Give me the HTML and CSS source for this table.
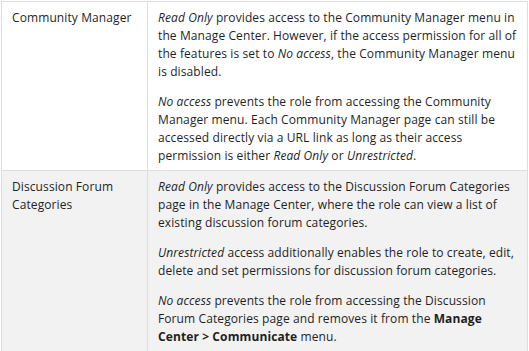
FILE: index.html
```html
<!DOCTYPE html>
<html>
<head>
<meta charset="utf-8">
<link rel="stylesheet" href="styles.css">
</head>
<body>
<table class="perm">
  <tr class="row-white">
    <td class="name">Community Manager</td>
    <td class="desc">
      <p><em>Read Only</em> provides access to the Community Manager menu in the Manage Center. However, if the access permission for all of the features is set to <em>No access</em>, the Community Manager menu is disabled.</p>
      <p><em>No access</em> prevents the role from accessing the Community Manager menu. Each Community Manager page can still be accessed directly via a URL link as long as their access permission is either <em>Read Only</em> or <em>Unrestricted</em>.</p>
    </td>
  </tr>
  <tr class="row-gray">
    <td class="name">Discussion Forum Categories</td>
    <td class="desc">
      <p><em>Read Only</em> provides access to the Discussion Forum Categories page in the Manage Center, where the role can view a list of existing discussion forum categories.</p>
      <p><em>Unrestricted</em> access additionally enables the role to create, edit, delete and set permissions for discussion forum categories.</p>
      <p><em>No access</em> prevents the role from accessing the Discussion Forum Categories page and removes it from the <strong>Manage Center &gt; Communicate</strong> menu.</p>
    </td>
  </tr>
</table>
</body>
</html>
```
FILE: styles.css
```css
html, body {
  margin: 0;
  padding: 0;
  background: #ffffff;
}
body {
  padding: 1px 0 0 1px;
  font-family: "Open Sans", "Lato", sans-serif;
  font-size: 12px;
  line-height: 18px;
  letter-spacing: 0.1px;
  color: #1f1f1f;
}
.perm {
  border-collapse: collapse;
  width: 527px;
}
.perm td {
  border: 1px solid #dedede;
  vertical-align: top;
  padding: 7px 10px 5px 10px;
}
.name {
  width: 125px;
}
.row-gray td {
  background: #f2f2f2;
}
.desc p {
  margin: 0 0 12px 0;
}
.desc p:last-child {
  margin-bottom: 0;
}
strong {
  font-weight: 700;
}
```
